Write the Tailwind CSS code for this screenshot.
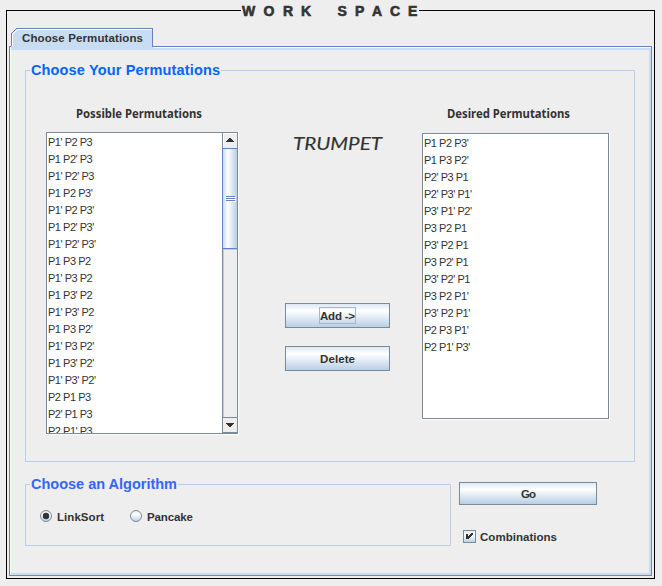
<!DOCTYPE html>
<html lang="en">
<head>
<meta charset="utf-8">
<title>Work Space</title>
<script src="https://cdn.jsdelivr.net/npm/@tailwindcss/browser@4"></script>
</head>
<body class="flex h-[586px] w-[662px] overflow-hidden bg-[#eee] pt-[10px] pl-[6px] font-['Liberation_Sans',Arial,sans-serif] text-[11px] text-[#333]">
<main class="flex h-[569px] w-[649px] flex-col border border-black pl-[2px]">
  <h1 class="-mt-[10px] ml-[232px] h-[20px] w-[178px] shrink-0 bg-[#eee] pl-px text-[14px] leading-[21px] font-black whitespace-pre"><svg class="block h-[20px] w-[178px] overflow-visible" fill="#333" stroke="#333" stroke-width=".6"><text x="0 21.500 41 59" y="15">WORK</text><text x="95.500 113 130 148 166" y="15">SPACE</text></svg></h1>
  <div class="relative z-10 mt-[7px] ml-[2px] h-[19px] w-[142px] shrink-0">
    <svg class="absolute inset-0" width="142" height="21" shape-rendering="crispEdges"><path d="M0 21V6L6 0H142V21Z" fill="#c8ddf2"/><path d="M1.5 18V6.500L6.500 1.500H141" fill="none" stroke="#fff"/><path d="M.5 18V5.500L5.500 .5H141.500V19" fill="none" stroke="#6382bf"/></svg>
    <svg class="absolute inset-0 overflow-visible" width="142" height="19" fill="#333" font-weight="bold" font-size="11.500"><text x="11" y="14" textLength="121">Choose Permutations</text></svg>
  </div>
  <section class="-mt-px h-[530px] w-[643px] shrink-0 border border-t-[#6382bf] border-r-[#7a8a99] border-b-[#7a8a99] border-l-[#6382bf]">
    <div class="h-full border-t border-l border-white">
      <div class="h-full border-t-2 border-r-2 border-b-2 border-[#c8ddf2] pt-[20px] pl-[14px]">
        <section class="h-[392px] w-[610px] border border-[#b8cfe5]">
          <h2 class="-mt-[11px] ml-[4px] h-[20px] w-[191px] bg-[#eee] pl-px"><svg class="block h-[20px] w-[190px]" fill="#0066ff" font-size="14.500" font-weight="bold"><text x="0" y="15" textLength="189">Choose Your Permutations</text></svg></h2>
          <div class="flex">
            <div class="ml-[20px] w-[193px] pt-[25px]">
              <h3 class="h-[27px] pl-[30px]"><svg class="block h-[18px] w-[130px] overflow-visible" fill="#333" font-family="Noto Sans, sans-serif" font-size="11.500" font-weight="bold"><text x="0" y="13" textLength="126" lengthAdjust="spacingAndGlyphs">Possible Permutations</text></svg></h3>
              <div class="h-[303px] border-r border-b border-white">
                <div class="flex h-[302px] border border-[#7a8a99] bg-white">
                  <ul class="h-[300px] w-[175px] overflow-hidden pt-px pl-px leading-[17px] tracking-[-0.48px]">
                    <li>P1' P2 P3</li><li>P1 P2' P3</li><li>P1' P2' P3</li><li>P1 P2 P3'</li><li>P1' P2 P3'</li><li>P1 P2' P3'</li><li>P1' P2' P3'</li><li>P1 P3 P2</li><li>P1' P3 P2</li><li>P1 P3' P2</li><li>P1' P3' P2</li><li>P1 P3 P2'</li><li>P1' P3 P2'</li><li>P1 P3' P2'</li><li>P1' P3' P2'</li><li>P2 P1 P3</li><li>P2' P1 P3</li><li>P2 P1' P3</li>
                  </ul>
                  <div class="flex w-[15px] flex-col border-l border-[#7a8a99] bg-[#eee]">
                    <div class="flex h-[15px] items-center justify-center border-t border-l border-white pr-px pb-[2px]"><svg width="8" height="4" shape-rendering="crispEdges" fill="#333"><path d="M3 0h2v1h1v1h1v1h1v1H0V3h1V2h1V1h1z"/></svg></div>
                    <div class="-ml-px flex h-[101px] w-[15px] items-center justify-center border-y border-l border-[#6382bf] bg-linear-to-r from-[#c8ddf2] via-white via-35% to-[#b8cfe5] pl-[2px]"><svg width="10" height="6" shape-rendering="crispEdges"><path d="M1 1.500H10M1 3.500H10M1 5.500H10" stroke="#fff"/><path d="M0 .5H9M0 2.500H9M0 4.500H9" stroke="#6382bf"/></svg></div>
                    <div class="h-[168px] border-t border-l border-[#b8cfe5]"></div>
                    <div class="flex flex-1 items-center justify-center border-t border-b border-[#7a8a99]"><svg width="8" height="4" shape-rendering="crispEdges" fill="#333"><path d="M0 0h8v1H7v1H6v1H5v1H3V3H2V2H1V1H0z"/></svg></div>
                  </div>
                </div>
              </div>
            </div>
            <div class="ml-[46px] w-[105px] pt-[53px]">
              <svg class="ml-[8px] block h-[22px] w-[91px] overflow-visible" fill="#333" stroke="#333" stroke-width=".15" font-family="Lato, sans-serif" font-size="17.500" font-style="italic"><text x="0" y="17" textLength="89" lengthAdjust="spacingAndGlyphs">TRUMPET</text></svg>
              <button class="mt-[148px] flex h-[25px] w-[105px] items-center justify-center border border-[#7a8a99] bg-linear-to-b from-[#dde8f3] via-white via-30% to-[#b8cfe5]"><span class="flex h-[17px] w-[37px] border border-[#a3b8cc]"><svg class="block h-[15px] w-[36px] overflow-visible" fill="#333" font-size="11.500" font-weight="bold"><text x="0" y="12" textLength="35">Add -&gt;</text></svg></span></button>
              <button class="mt-[18px] flex h-[25px] w-[105px] items-center justify-center border border-[#7a8a99] bg-linear-to-b from-[#dde8f3] via-white via-30% to-[#b8cfe5]"><svg class="block h-[15px] w-[35px] overflow-visible" fill="#333" font-size="11.500" font-weight="bold"><text x="0" y="12" textLength="35">Delete</text></svg></button>
            </div>
            <div class="ml-[32px] w-[188px] pt-[25px]">
              <h3 class="h-[28px] pl-[25px]"><svg class="block h-[18px] w-[130px] overflow-visible" fill="#333" font-family="Noto Sans, sans-serif" font-size="11.500" font-weight="bold"><text x="0" y="13" textLength="123" lengthAdjust="spacingAndGlyphs">Desired Permutations</text></svg></h3>
              <div class="h-[287px] border-r border-b border-white">
                <ul class="h-[286px] border border-[#7a8a99] bg-white pt-px pl-px leading-[17px] tracking-[-0.48px]">
                  <li>P1 P2 P3'</li><li>P1 P3 P2'</li><li>P2' P3 P1</li><li>P2' P3' P1'</li><li>P3' P1' P2'</li><li>P3 P2 P1</li><li>P3' P2 P1</li><li>P3 P2' P1</li><li>P3' P2' P1</li><li>P3 P2 P1'</li><li>P3' P2 P1'</li><li>P2 P3 P1'</li><li>P2 P1' P3'</li>
                </ul>
              </div>
            </div>
          </div>
        </section>
        <div class="flex">
          <section class="mt-[22px] h-[62px] w-[426px] border border-[#b8cfe5]">
            <h2 class="-mt-[11px] ml-[4px] h-[20px] w-[148px] bg-[#eee] pl-px"><svg class="block h-[20px] w-[147px]" fill="#3366ff" font-size="14.500" font-weight="bold"><text x="0" y="15" textLength="146">Choose an Algorithm</text></svg></h2>
            <div class="flex pt-[14px] pl-[14px]">
              <label class="flex w-[90px]"><svg class="mt-[2px] block" width="13" height="13"><defs><linearGradient id="r" x2="0" y2="1"><stop stop-color="#dde8f3"/><stop offset=".35" stop-color="#fff"/><stop offset="1" stop-color="#b8cfe5"/></linearGradient></defs><circle cx="6" cy="6" r="5.500" fill="url(#r)" stroke="#7a8a99"/><circle cx="6" cy="6" r="3.200" fill="#333"/></svg><svg class="ml-[4px] block h-[18px] w-[50px] overflow-visible" fill="#333" font-size="11.500" font-weight="bold"><text x="0" y="13" textLength="47">LinkSort</text></svg></label>
              <label class="flex"><svg class="mt-[2px] block" width="13" height="13"><circle cx="6" cy="6" r="5.500" fill="url(#r)" stroke="#7a8a99"/></svg><svg class="ml-[4px] block h-[18px] w-[50px] overflow-visible" fill="#333" font-size="11.500" font-weight="bold"><text x="0" y="13" textLength="46">Pancake</text></svg></label>
            </div>
          </section>
          <div class="mt-[20px] ml-[8px]">
            <button class="flex h-[23px] w-[138px] items-center justify-center border border-[#7a8a99] bg-linear-to-b from-[#dde8f3] via-white via-30% to-[#b8cfe5]"><svg class="block h-[15px] w-[15px] overflow-visible" fill="#333" font-size="11.500" font-weight="bold"><text x="0" y="12" textLength="15">Go</text></svg></button>
            <label class="mt-[25px] ml-[4px] flex"><svg class="block" width="13" height="13"><rect x=".5" y=".5" width="12" height="12" fill="url(#r)" stroke="#7a8a99"/><path d="M3 4h2v2h1V5h1V4h1V3h2v2H9v1H8v1H7v1H6v1H3z" fill="#333" shape-rendering="crispEdges"/></svg><svg class="ml-[4px] block h-[18px] w-[80px] overflow-visible" fill="#333" font-size="11.500" font-weight="bold"><text x="0" y="11" textLength="77">Combinations</text></svg></label>
          </div>
        </div>
      </div>
    </div>
  </section>
</main>
</body>
</html>
